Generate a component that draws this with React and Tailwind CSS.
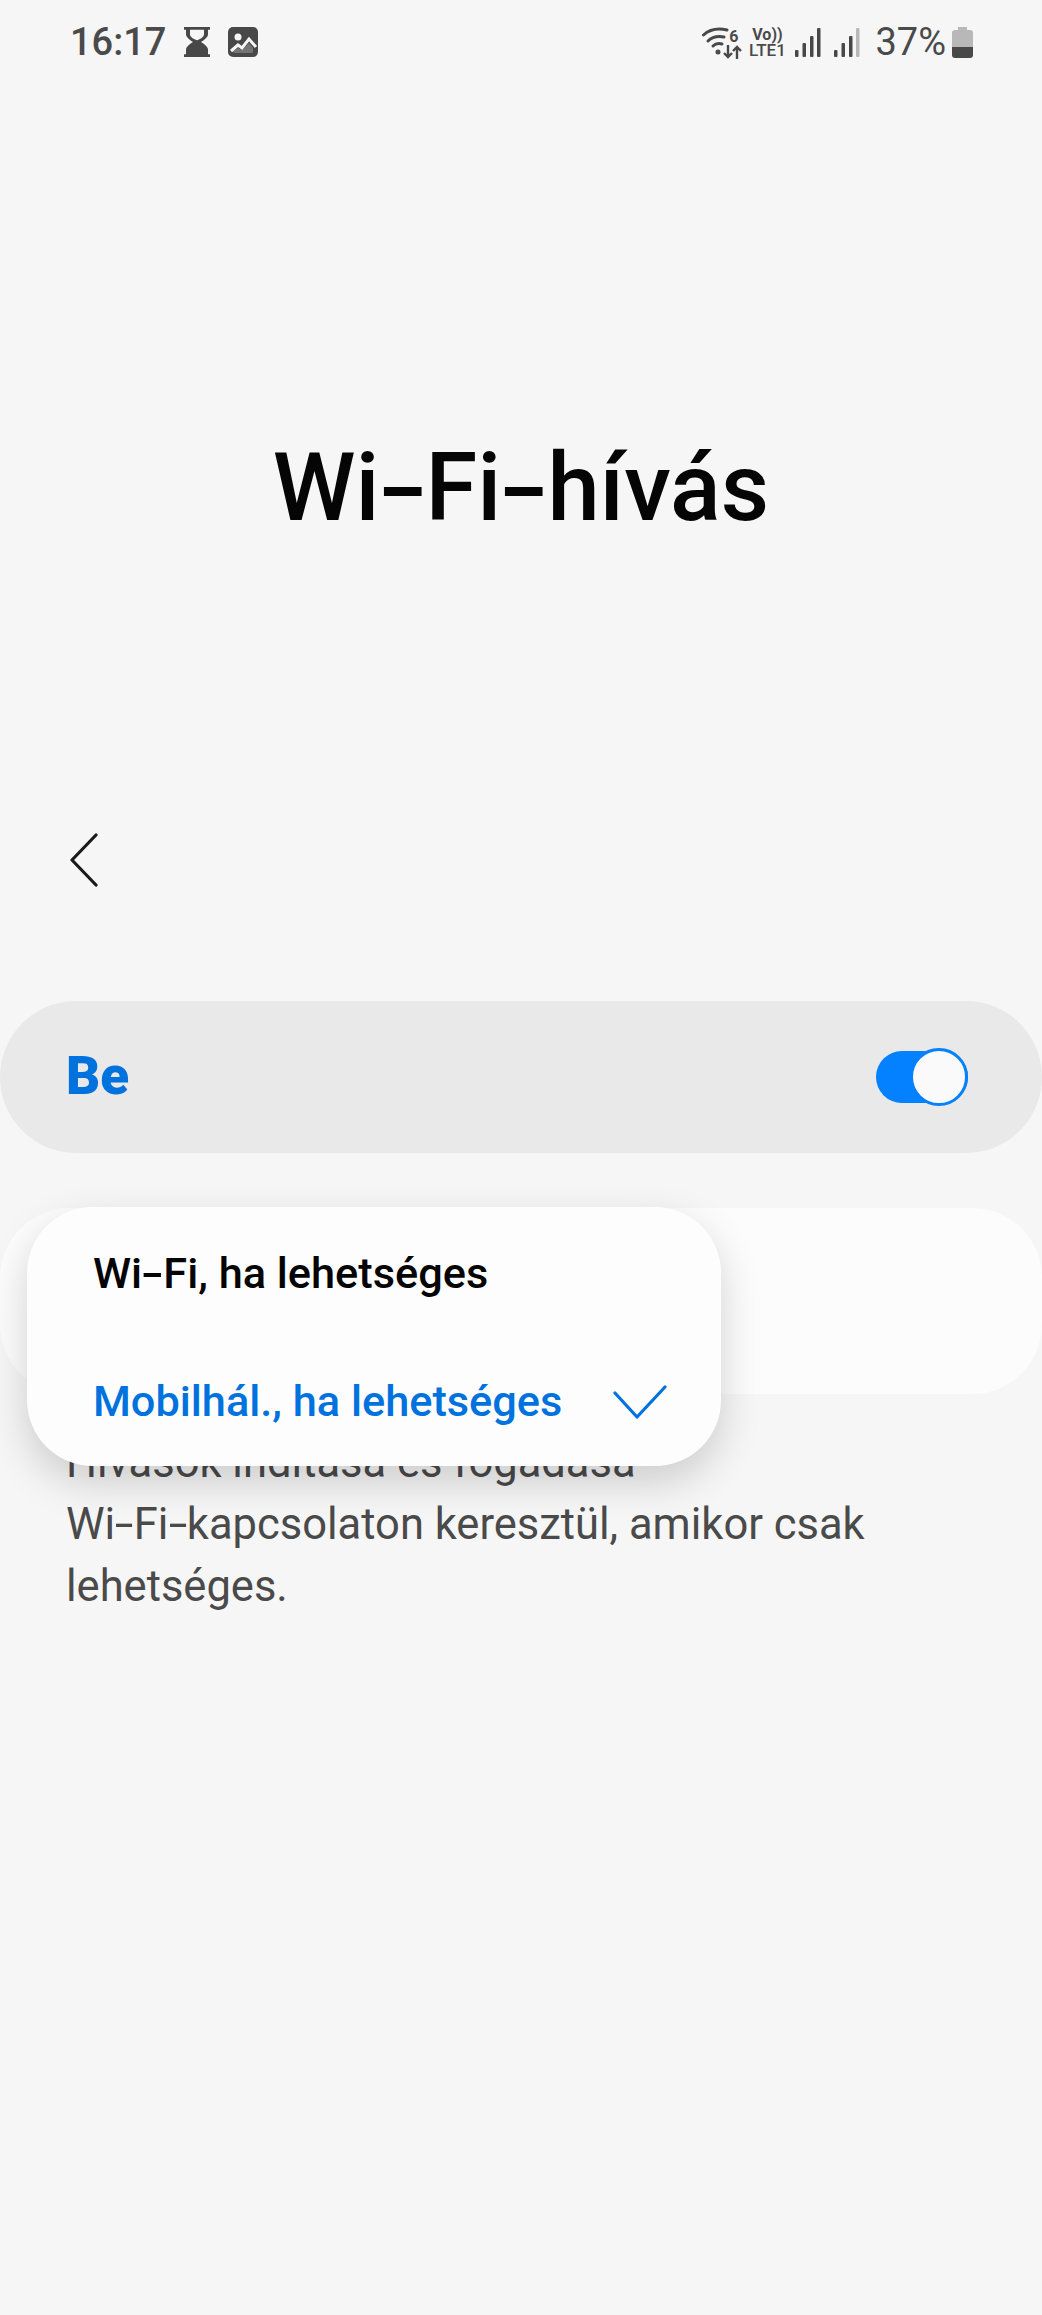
import React from 'react';

// the reference font has a longer hyphen than Roboto
const Dash = () => <span className="inline-block mx-[0.075em] scale-x-[1.55]">-</span>;

const StatusBar = () => (
    <div className="h-[84px] pl-[70px] pr-[69px] flex items-center justify-between text-[#4a4a4a]">
        <div className="flex items-center">
            <span className="text-[38px] leading-none font-medium">16:17</span>
            <svg className="ml-[18px]" width="26" height="30" viewBox="0 0 26 32" fill="#484848" preserveAspectRatio="none">
                <path d="M0 0h26v3h-2v5c0 3-4 6-7 8 3 2 7 5 7 8v5h2v3H0v-3h2v-5c0-3 4-6 7-8-3-2-7-5-7-8V3H0zm6 3v5c0 2 3 5 7 6 4-1 7-4 7-6V3z" />
                <path d="M6 25c1-3 4-4 7-5 3 1 6 2 7 5v4H6z" />
            </svg>
            <svg className="ml-[18px]" width="30" height="30" viewBox="0 0 30 30" fill="none">
                <rect width="30" height="30" rx="5" fill="#484848" />
                <circle cx="10" cy="10" r="3.5" fill="#f6f6f6" />
                <path d="M3 24l7-6 4 3 7-9 7 8" stroke="#f6f6f6" strokeWidth="3" />
                <path d="M5 24l5-3 4 2 7-7 4 5v4q0 1-2 1H7q-2 0-2-2z" fill="#f6f6f6" opacity="0.25" />
            </svg>
        </div>
        <div className="flex items-center">
            <div className="relative w-[40px] h-[32px]">
                <svg width="28" height="32" viewBox="0 0 28 32" fill="none" stroke="#484848" strokeWidth="3" strokeLinecap="round">
                    <path d="M1.5 9C7 4 16 2 25 4" />
                    <path d="M6 15c4-4 10-5 16-4" />
                    <path d="M11 20c2-2 5-3 9-2" />
                    <circle cx="16" cy="26" r="1" fill="#484848" />
                </svg>
                <span className="absolute right-[4px] top-[3px] text-[16px] leading-[16px] font-bold">6</span>
                <svg className="absolute left-[21px] top-[19px]" width="19" height="14" viewBox="0 0 19 14" fill="none" stroke="#484848" strokeWidth="2.4">
                    <path d="M5 0v12M1 8l4 4 4-4M14 14V2M10 6l4-4 4 4" />
                </svg>
            </div>
            <div className="ml-[7px] w-[36px] flex flex-col items-center font-medium leading-none">
                <span className="text-[16px] leading-[15px] font-bold">Vo))</span>
                <span className="text-[17px] leading-[16px]">LTE1</span>
            </div>
            <svg className="ml-[10px]" width="26" height="29" viewBox="0 0 26 29" fill="#484848">
                <rect x="0" y="22" width="3.5" height="7" rx="1" />
                <rect x="7.5" y="15" width="3.5" height="14" rx="1" />
                <rect x="15" y="8" width="3.5" height="21" rx="1" />
                <rect x="22" y="0" width="3.5" height="29" rx="1" />
            </svg>
            <svg className="ml-[13px]" width="26" height="29" viewBox="0 0 26 29" fill="#484848">
                <rect x="0" y="22" width="3.5" height="7" rx="1" />
                <rect x="7.5" y="15" width="3.5" height="14" rx="1" />
                <rect x="15" y="8" width="3.5" height="21" rx="1" />
                <rect x="22" y="0" width="3.5" height="29" rx="1" fill="#b8b8b8" />
            </svg>
            <span className="ml-[15px] text-[38px] leading-none">37%</span>
            <svg className="ml-[6px]" width="21" height="31" viewBox="0 0 21 31">
                <path d="M6 0h9v3h3q3 0 3 3v14H0V6q0-3 3-3h3z" fill="#b8b8b8" />
                <path d="M0 20h21v8q0 3-3 3H3q-3 0-3-3z" fill="#484848" />
            </svg>
        </div>
    </div>
);

const App = () => {
    return (
        <div className="relative w-[1042px] h-[2315px] overflow-hidden bg-[#f6f6f6] font-['Roboto',sans-serif]">
            <StatusBar />

            {/* Collapsed title */}
            <h1 className="mt-[357px] h-[94px] text-center text-[94px] leading-[94px] font-medium text-[#050505]">Wi<Dash />Fi<Dash />hívás</h1>

            <div className="mt-[295px] pl-[70px] h-[60px] flex items-center">
                <svg width="28" height="54" viewBox="0 0 28 54" fill="none" stroke="#1a1a1a" strokeWidth="3.2" strokeLinecap="round" strokeLinejoin="round">
                    <path d="M26 2L2 27l24 25" />
                </svg>
            </div>

            <div className="mt-[111px] h-[152px] rounded-[76px] bg-[#e9e9e9] pl-[66px] pr-[74px] flex items-center justify-between">
                <span className="text-[53px] font-black text-[#0072de]">Be</span>
                <div className="relative w-[92px] h-[58px] flex items-center">
                    <div className="w-full h-[52px] rounded-full bg-[#0381fe]" />
                    <div className="absolute right-0 top-0 w-[58px] h-[58px] rounded-full bg-[#fafafa] border-[3px] border-[#0381fe]" />
                </div>
            </div>

            <div className="mt-[55px] h-[186px] rounded-[70px] bg-[#fcfcfc]" />

            <p className="mt-[38px] px-[66px] text-[43.5px] leading-[62px] text-[#4a4a4a]">
                Hívások indítása és fogadása<br />Wi<Dash />Fi<Dash />kapcsolaton keresztül, amikor csak<br />lehetséges.
            </p>

            {/* Popup menu over the card */}
            <div className="absolute left-[27px] top-[1207px] w-[694px] h-[259px] rounded-[66px] bg-[#fdfdfd] shadow-[0_16px_40px_rgba(0,0,0,0.17)] pt-[4px] pl-[66px] pr-[54px] flex flex-col">
                <div className="h-[130px] flex items-center text-[43.3px] font-medium text-[#050505]"><span>Wi<Dash />Fi, ha lehetséges</span></div>
                <div className="h-[130px] flex items-center justify-between text-[43.3px] font-medium text-[#0072de]">
                    <span>Mobilhál., ha lehetséges</span>
                    <svg width="54" height="34" viewBox="0 0 54 34" fill="none" stroke="#0072de" strokeWidth="3.2" strokeLinecap="round" strokeLinejoin="round">
                        <path d="M2 8l22 24L52 2" />
                    </svg>
                </div>
            </div>
        </div>
    );
};

export default App;
